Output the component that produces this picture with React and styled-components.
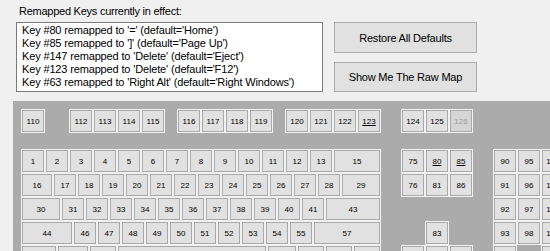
import React from "react";
import styled, { createGlobalStyle } from "styled-components";

const GlobalStyle = createGlobalStyle`
  html, body {
    margin: 0;
    padding: 0;
    background: #f0f0f0;
  }
  body {
    width: 550px;
    height: 251px;
    overflow: hidden;
    font-family: "Liberation Sans", Arial, sans-serif;
  }
`;

const Window = styled.div`
  display: flex;
  flex-direction: column;
  width: 550px;
  height: 251px;
  overflow: hidden;
`;

const TopArea = styled.div`
  display: flex;
  gap: 11px;
  padding: 5px 0 0 16px;
  height: 101px;
  flex-shrink: 0;
  box-sizing: border-box;
`;

const MappingColumn = styled.div`
  display: flex;
  flex-direction: column;
`;

const Caption = styled.div`
  height: 17px;
  padding-left: 3px;
  font-size: 11px;
  line-height: 13px;
  letter-spacing: -0.25px;
  color: #000;
`;

const ListBox = styled.div`
  box-sizing: border-box;
  width: 307px;
  height: 70px;
  border: 1px solid #7a7a7a;
  background: #fff;
  padding: 1px 0 0 5px;
  font-size: 11px;
  line-height: 13px;
  letter-spacing: -0.15px;
  color: #000;
  white-space: nowrap;
  overflow: hidden;
`;

const ButtonColumn = styled.div`
  display: flex;
  flex-direction: column;
  gap: 9px;
  padding-top: 17px;
`;

const Button = styled.button`
  box-sizing: border-box;
  width: 143px;
  height: ${(p) => p.$h}px;
  border: 1px solid #adadad;
  background: #e1e1e1;
  font-family: "Liberation Sans", Arial, sans-serif;
  font-size: 11px;
  letter-spacing: -0.2px;
  color: #000;
  padding: 0;
`;

const Board = styled.div`
  flex: 1;
  margin-left: 13px;
  background: #ababab;
  padding: 8px 0 0 8px;
  display: flex;
  flex-direction: column;
  gap: 16px;
`;

const FRow = styled.div`
  display: flex;
`;

const Group = styled.div`
  display: flex;
  margin-left: ${(p) => p.$gap || 0}px;
`;

const MainBlock = styled.div`
  display: flex;
  gap: 20px;
  align-items: flex-start;
`;

const Cluster = styled.div`
  display: flex;
  flex-direction: column;
  width: ${(p) => p.$w}px;
  flex-shrink: 0;
`;

const KeyRow = styled.div`
  display: flex;
  height: 24px;
`;

const Blank = styled.div`
  width: 24px;
  height: 24px;
`;

const Key = styled.div`
  box-sizing: border-box;
  flex-shrink: 0;
  width: ${(p) => p.$w || 24}px;
  height: 24px;
  border: 1px solid #f2f2f2;
  box-shadow: inset 0 0 0 1px #a9a9a9;
  background: ${(p) => (p.$off ? "#d5d5d5" : "#e1e1e1")};
  display: flex;
  align-items: center;
  justify-content: center;
  font-family: "Liberation Sans", Arial, sans-serif;
  font-size: 8px;
  color: ${(p) => (p.$off ? "#9b9b9b" : "#000")};
  text-decoration: ${(p) => (p.$mapped ? "underline" : "none")};
  text-underline-offset: 1px;
`;

const mappings = [
  "Key #80 remapped to '=' (default='Home')",
  "Key #85 remapped to ']' (default='Page Up')",
  "Key #147 remapped to 'Delete' (default='Eject')",
  "Key #123 remapped to 'Delete' (default='F12')",
  "Key #63 remapped to 'Right Alt' (default='Right Windows')",
];

const remapped = [80, 85, 123, 147, 63];

const fGroups = [
  { gap: 0, keys: [110] },
  { gap: 24, keys: [112, 113, 114, 115] },
  { gap: 12, keys: [116, 117, 118, 119] },
  { gap: 12, keys: [120, 121, 122, 123] },
  { gap: 20, keys: [124, 125, 126] },
];

// [label, width]
const mainRows = [
  [[1], [2], [3], [4], [5], [6], [7], [8], [9], [10], [11], [12], [13], [15, 48]],
  [[16, 32], [17], [18], [19], [20], [21], [22], [23], [24], [25], [26], [27], [28], [29, 40]],
  [[30, 40], [31], [32], [33], [34], [35], [36], [37], [38], [39], [40], [41], [43, 56]],
  [[44, 52], [46], [47], [48], [49], [50], [51], [52], [53], [54], [55], [57, 68]],
  [[58, 36], [59, 32], [60, 28], [61, 150], [62, 30], [63, 28], [64, 28], [65, 28]],
];

const navRows = [
  [75, 80, 85],
  [76, 81, 86],
  [null, null, null],
  [null, 83, null],
  [79, 84, 89],
];

const padRows = [
  [90, 95, 100, 105],
  [91, 96, 101, 106],
  [92, 97, 102, 107],
  [93, 98, 103, 108],
  [99, null, 104, null],
];

const renderKey = (n, w) => (
  <Key key={n} $w={w} $mapped={remapped.includes(n)} $off={n === 126}>
    {n}
  </Key>
);

const GridCluster = ({ rows, w }) => (
  <Cluster $w={w}>
    {rows.map((row, i) => (
      <KeyRow key={i}>
        {row.map((n, j) => (n === null ? <Blank key={j} /> : renderKey(n)))}
      </KeyRow>
    ))}
  </Cluster>
);

const App = () => (
  <Window>
    <GlobalStyle />
    <TopArea>
      <MappingColumn>
        <Caption>Remapped Keys currently in effect:</Caption>
        <ListBox>
          {mappings.map((m) => (
            <div key={m}>{m}</div>
          ))}
        </ListBox>
      </MappingColumn>
      <ButtonColumn>
        <Button $h={31}>Restore All Defaults</Button>
        <Button $h={30}>Show Me The Raw Map</Button>
      </ButtonColumn>
    </TopArea>
    <Board>
      <FRow>
        {fGroups.map((g, i) => (
          <Group key={i} $gap={g.gap}>
            {g.keys.map((n) => renderKey(n))}
          </Group>
        ))}
      </FRow>
      <MainBlock>
        <Cluster $w={360}>
          {mainRows.map((row, i) => (
            <KeyRow key={i}>{row.map(([n, w]) => renderKey(n, w))}</KeyRow>
          ))}
        </Cluster>
        <GridCluster rows={navRows} w={72} />
        <GridCluster rows={padRows} w={96} />
      </MainBlock>
    </Board>
  </Window>
);

export default App;
